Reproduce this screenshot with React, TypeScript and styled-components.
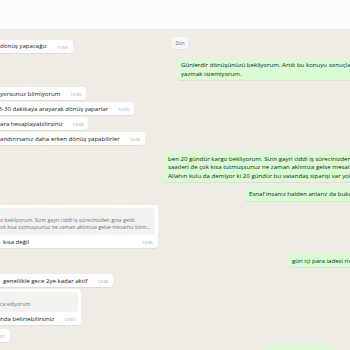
import React from "react";
import styled, { createGlobalStyle } from "styled-components";

const GlobalStyle = createGlobalStyle`
  *, *::before, *::after {
    box-sizing: border-box;
  }
  html, body {
    margin: 0;
    padding: 0;
  }
  body {
    width: 350px;
    height: 350px;
    overflow: hidden;
    background: #efebe5;
    font-family: "Open Sans", "Noto Sans", sans-serif;
    color: #111b21;
  }
`;

const Screen = styled.div`
  width: 350px;
  height: 350px;
  overflow: hidden;
  display: flex;
  flex-direction: column;
  background: #efebe5;
`;

const TopBar = styled.div`
  flex: none;
  height: 30px;
  background: #fcfcfc;
  border-bottom: 1px solid #ebe9e6;
`;

const Chat = styled.div`
  flex: 1;
  width: 360px;
  display: flex;
  flex-direction: column;
`;

const DayRow = styled.div<{ $top: number }>`
  display: grid;
  grid-template-columns: 1fr auto 1fr;
  align-items: start;
  justify-items: start;
  margin-top: ${(p) => p.$top}px;
`;

const DayChip = styled.div`
  padding: 2.5px 3.5px;
  height: 12px;
  background: #f7f7f6;
  border-radius: 2px;
  font-size: 4.6px;
  line-height: 7px;
  color: #54656f;
  box-shadow: 0 0.5px 0.5px rgba(11, 20, 26, 0.08);
`;

const InRow = styled.div<{ $top: number }>`
  display: flex;
  justify-content: flex-start;
  margin-top: ${(p) => p.$top}px;
`;

const OutRow = styled.div<{ $top: number; $from: number }>`
  display: flex;
  justify-content: flex-start;
  margin-top: ${(p) => p.$top}px;
  padding-left: ${(p) => p.$from}px;
`;

const InBubble = styled.div<{ $shift?: number; $lift?: number }>`
  flex: none;
  align-self: flex-start;
  min-height: 13px;
  margin-left: ${(p) => -(p.$shift ?? 8)}px;
  margin-top: ${(p) => p.$lift ?? 0}px;
  padding: 2.3px 5px 2.3px 8px;
  background: #ffffff;
  border-radius: 3px;
  box-shadow: 0 0.5px 0.6px rgba(11, 20, 26, 0.13);
  display: flex;
  align-items: flex-end;
  gap: 10px;
`;

const QuotedBubble = styled.div`
  flex: none;
  margin-left: -8px;
  padding: 3px 3px 2px 3px;
  background: #ffffff;
  border-radius: 3px;
  box-shadow: 0 0.5px 0.6px rgba(11, 20, 26, 0.13);
  display: flex;
  flex-direction: column;
`;

const Quote = styled.div`
  padding: 9px 5px 3.5px 5px;
  background: #f2f2f1;
  border-radius: 3px;
  font-size: 5.25px;
  line-height: 7.6px;
  color: #667781;
  white-space: nowrap;
`;

const QuoteFoot = styled.div<{ $indent?: number }>`
  display: flex;
  justify-content: space-between;
  align-items: flex-end;
  gap: 10px;
  padding: 2.5px 3px 0 ${(p) => p.$indent ?? 5}px;
`;

const OutBubble = styled.div`
  flex: none;
  padding: 2.3px 8px 2.3px 4px;
  background: #d9fdd3;
  border-radius: 3px;
  box-shadow: 0 0.5px 0.6px rgba(11, 20, 26, 0.13);
  white-space: nowrap;
`;

const Text = styled.div`
  font-size: 6.1px;
  line-height: 8.4px;
  white-space: nowrap;
`;

const Time = styled.span`
  flex: none;
  font-size: 4.2px;
  line-height: 6px;
  color: #8a979e;
`;

type InMsg = { text: string; time: string; top: number; shift?: number };

const incomingA: InMsg[] = [
  { text: "yorsunuz bilmiyorum", time: "12:00", top: 7 },
  { text: "15-30 dakikaya arayarak dönüş yaparlar", time: "12:00", top: 2, shift: 13 },
  { text: "ara hesaplayabilirsiniz", time: "12:04", top: 2 },
  { text: "andırırsanız daha erken dönüş yapabilirler", time: "12:05", top: 2 },
];

const App: React.FC = () => {
  return (
    <>
      <GlobalStyle />
      <Screen>
        <TopBar />
        <Chat>
          <DayRow $top={7}>
            <InBubble $lift={3}>
              <Text>dönüş yapacağız</Text>
              <Time>11:59</Time>
            </InBubble>
            <DayChip>Dün</DayChip>
          </DayRow>

          <OutRow $top={6} $from={177}>
            <OutBubble>
              <Text>
                Günlerdir dönüşünüzü bekliyorum. Artık bu konuyu sonuçlandırmak istiyorum, size tekrar tekrar
              </Text>
              <Text>yazmak istemiyorum.</Text>
            </OutBubble>
          </OutRow>

          {incomingA.map((m) => (
            <InRow key={m.text} $top={m.top}>
              <InBubble $shift={m.shift}>
                <Text>{m.text}</Text>
                <Time>{m.time}</Time>
              </InBubble>
            </InRow>
          ))}

          <OutRow $top={7} $from={164}>
            <OutBubble>
              <Text>
                ben 20 gündür kargo bekliyorum. Sizin gayri ciddi iş sürecinizden gına geldi. Mesai
              </Text>
              <Text>
                saatleri de çok kısa tutmuşsunuz ne zaman aklımıza gelse mesainiz bitmiş oluyor.
              </Text>
              <Text>
                Allahın kulu da demiyor ki 20 gündür bu vatandaş siparişi var yok mu diye.
              </Text>
            </OutBubble>
          </OutRow>

          <OutRow $top={5.5} $from={245}>
            <OutBubble>
              <Text>Esnaf insanız halden anlarız da bukadarı da olmaz artık.</Text>
            </OutBubble>
          </OutRow>

          <InRow $top={4}>
            <QuotedBubble>
              <Quote>
                <div>o bekliyorum. Sizin gayri ciddi iş sürecinizden gına geldi.</div>
                <div>ok kısa tutmuşsunuz ne zaman aklımıza gelse mesainiz bitm...</div>
              </Quote>
              <QuoteFoot $indent={8}>
                <Text>kısa değil</Text>
                <Time>12:06</Time>
              </QuoteFoot>
            </QuotedBubble>
          </InRow>

          <OutRow $top={6} $from={288}>
            <OutBubble>
              <Text>gün içi para iadesi rica ediyorum</Text>
            </OutBubble>
          </OutRow>

          <InRow $top={7}>
            <InBubble $shift={5}>
              <Text>genellikle gece 2ye kadar aktif</Text>
              <Time>12:06</Time>
            </InBubble>
          </InRow>

          <InRow $top={2}>
            <QuotedBubble>
              <Quote>
                <div>ca ediyorum</div>
              </Quote>
              <QuoteFoot>
                <Text>nda belirtebilirsiniz</Text>
                <Time>12:07</Time>
              </QuoteFoot>
            </QuotedBubble>
          </InRow>

          <InRow $top={4}>
            <InBubble $shift={14}>
              <Time>12:07</Time>
            </InBubble>
          </InRow>

          <OutRow $top={3} $from={263}>
            <OutBubble>
              <Text>Tamam, bekliyorum.</Text>
            </OutBubble>
          </OutRow>
        </Chat>
      </Screen>
    </>
  );
};

export default App;
